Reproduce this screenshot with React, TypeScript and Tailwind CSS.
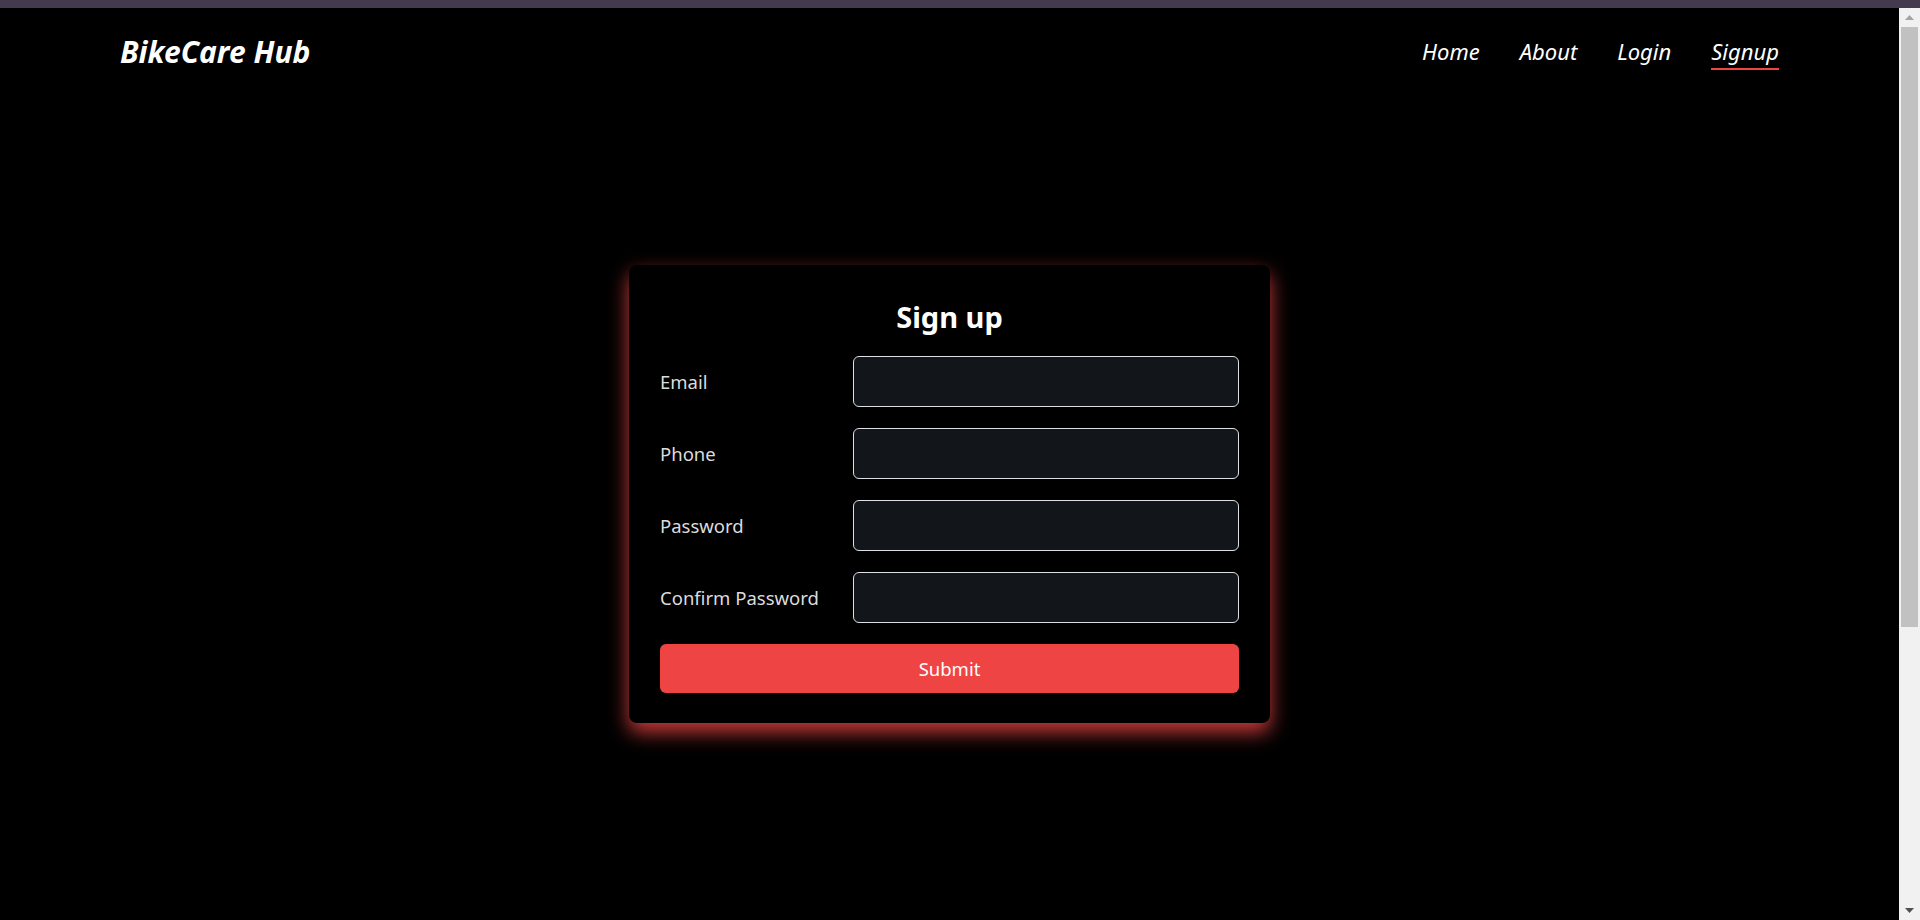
import { useState } from 'react';

const fields = [
  { id: 'email', label: 'Email', type: 'email' },
  { id: 'phone', label: 'Phone', type: 'tel' },
  { id: 'password', label: 'Password', type: 'password' },
  { id: 'confirm', label: 'Confirm Password', type: 'password' },
];

const links = ['Home', 'About', 'Login', 'Signup'];

// window scrollbar as it shows in the screenshot
function Scrollbar() {
  return (
    <div className="flex w-[21px] shrink-0 flex-col items-center bg-[#f1f1f1]">
      <svg width="9" height="5" viewBox="0 0 9 5" className="mt-[7px]">
        <path d="M0 5 L4.5 0 L9 5 Z" fill="#a3a3a3" />
      </svg>
      <div className="mt-[7px] h-[600px] w-[17px] bg-[#c1c1c1]" />
      <div className="flex-1" />
      <svg width="9" height="5" viewBox="0 0 9 5" className="mb-[7px]">
        <path d="M0 0 L9 0 L4.5 5 Z" fill="#505050" />
      </svg>
    </div>
  );
}

export default function App() {
  const [values, setValues] = useState<Record<string, string>>({});

  return (
    <div className="flex h-screen flex-col bg-black font-['Noto_Sans',sans-serif]">
      <div className="h-2 shrink-0 bg-[#433a4f]" />
      <div className="flex min-h-0 flex-1">
        <main className="min-w-0 flex-1 overflow-hidden">
          <nav className="flex h-[86px] items-center justify-between px-[120px]">
            <a className="text-[30px] font-bold italic text-white">BikeCare Hub</a>
            <ul className="flex items-center gap-10">
              {links.map((link) => (
                <li key={link} className="relative">
                  <a className="text-[22px] italic text-white">{link}</a>
                  {link === 'Signup' && (
                    <span className="absolute -bottom-[2px] left-0 right-0 h-[2px] bg-[#ef4444]" />
                  )}
                </li>
              ))}
            </ul>
          </nav>

          <div className="mt-[171px] flex justify-center">
            <form
              className="w-[641px] rounded-lg bg-black px-[31px] pt-8 pb-[30px] shadow-[0_9px_20px_rgba(239,68,68,0.85)]"
              onSubmit={(e) => e.preventDefault()}
            >
              <h2 className="mb-[19px] text-center text-[29px] leading-10 font-bold text-white">Sign up</h2>
              <div className="flex flex-col gap-[21px]">
                {fields.map((f) => (
                  <div key={f.id} className="grid grid-cols-3 items-center">
                    <label htmlFor={f.id} className="text-[18.5px] text-[#dcdcdc]">
                      {f.label}
                    </label>
                    <input
                      id={f.id}
                      type={f.type}
                      value={values[f.id] ?? ''}
                      onChange={(e) => setValues({ ...values, [f.id]: e.target.value })}
                      className="col-span-2 h-[51px] rounded-md border border-[#dde0e4] bg-[#121519] px-3 text-white outline-none"
                    />
                  </div>
                ))}
                <button
                  type="submit"
                  className="h-[49px] w-full rounded-md bg-[#ef4444] text-[18.5px] text-white"
                >
                  Submit
                </button>
              </div>
            </form>
          </div>
        </main>
        <Scrollbar />
      </div>
    </div>
  );
}
